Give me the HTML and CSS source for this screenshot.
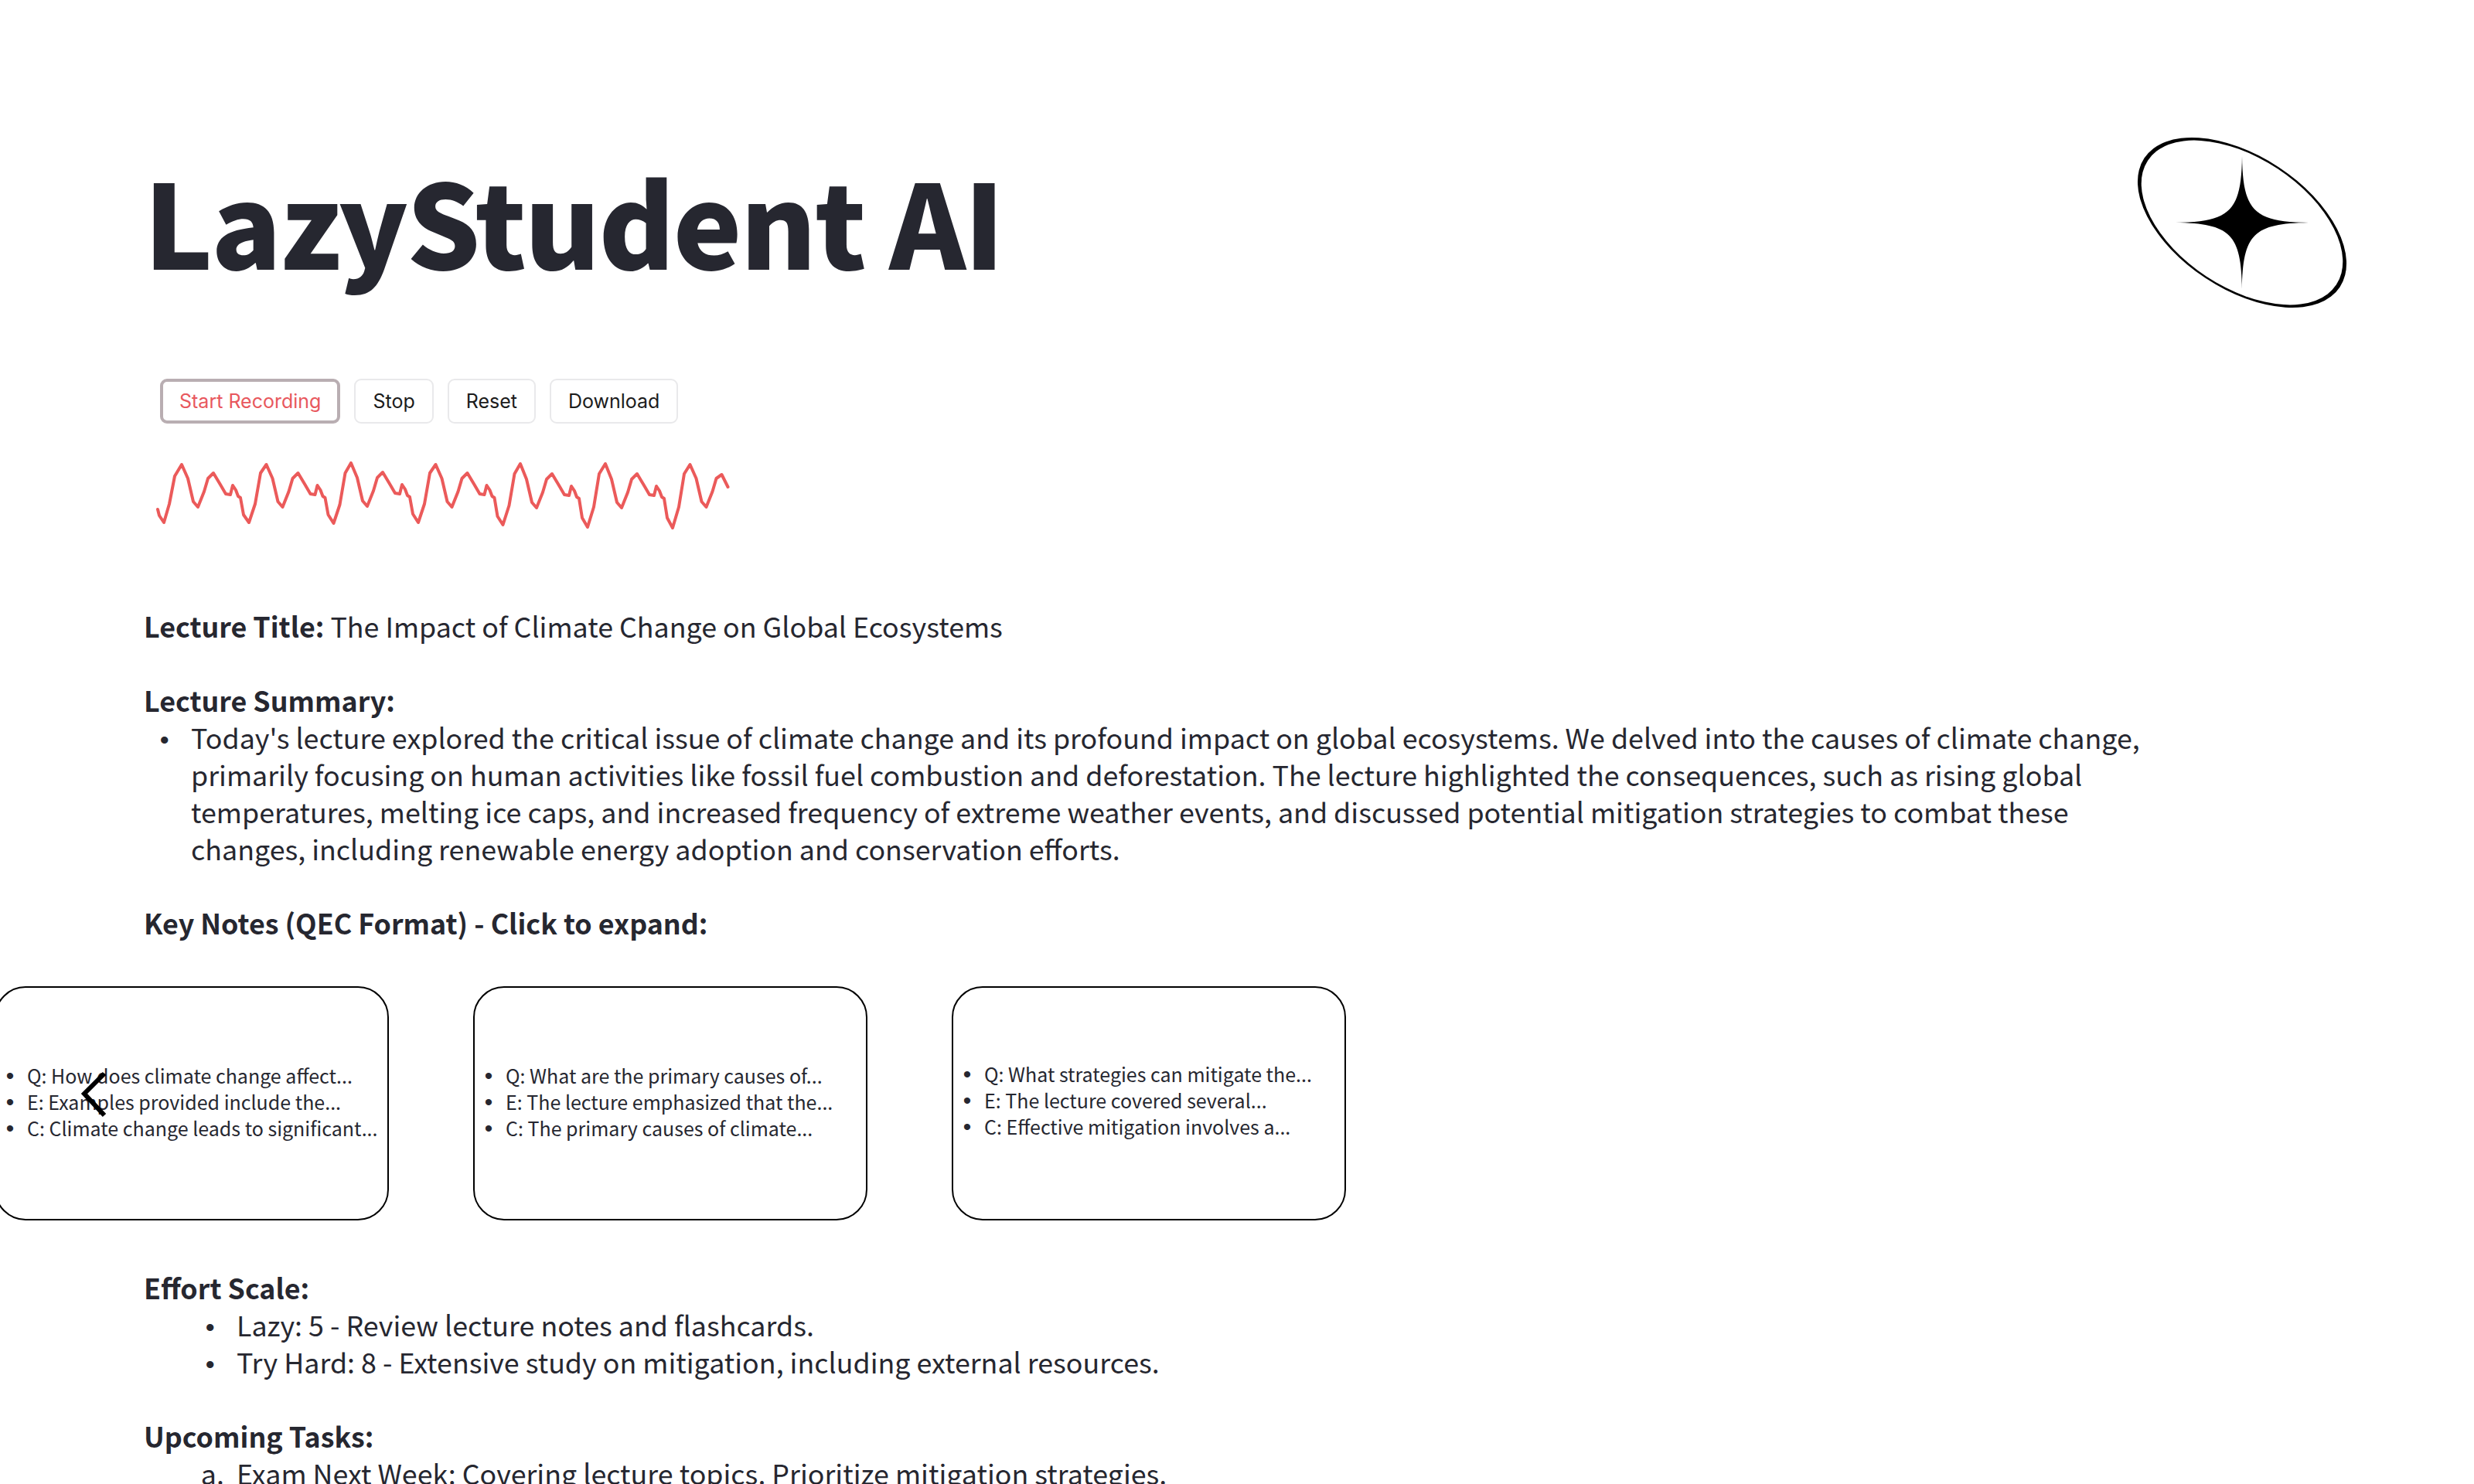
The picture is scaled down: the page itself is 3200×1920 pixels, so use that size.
FILE: index.html
```html
<!DOCTYPE html>
<html>
<head>
    <meta charset="utf-8">
    <title>LazyStudent AI</title>
    <link rel="stylesheet" href="styles.css">
</head>
<body>
    <div class="page">
        <div class="header">
            <h1 class="title">LazyStudent AI</h1>
            <svg class="logo" width="280" height="230" viewBox="0 0 280 230">
                <g transform="translate(140 115) rotate(33.4)">
                    <ellipse rx="151.5" ry="86" fill="#000"/>
                    <ellipse cx="0" cy="0" rx="146" ry="83.5" fill="#fff"/>
                </g>
                <path d="M140 29 C141 100 155 114 226 115 C155 116 141 130 140 201 C139 130 125 116 54 115 C125 114 139 100 140 29 Z" fill="#000"/>
            </svg>
        </div>

        <div class="toolbar">
            <button class="btn btn-active">Start Recording</button>
            <button class="btn">Stop</button>
            <button class="btn">Reset</button>
            <button class="btn">Download</button>
        </div>

        <svg class="wave" width="750" height="100" viewBox="0 0 750 100">
            <path fill="none" stroke="#eb5a5a" stroke-width="4" stroke-linejoin="round" stroke-linecap="round" d="M4 70 l2 8 l6 9 l7 -24 l7 -36 l9 -15
                l8 18 l7 30 l6 7 l8 -20 l5 -17 l7 -7 l9 15 l7 12 l6 1 l3 -12 l4 6 l3 8 l3 2 l4 22 l7 10 l8 -24 l7 -40 l7.5 -11
                l8 18 l7 30 l6 7 l8 -20 l5 -17 l7 -7 l9 15 l7 12 l6 1 l3 -12 l4 6 l3 8 l3 2 l4 22 l7 11 l8 -24 l7 -41 l7.5 -13
                l8 19 l7 30 l6 7 l8 -20 l5 -17 l7 -7 l9 15 l7 12 l6 1 l3 -12 l4 6 l3 8 l3 2 l4 22 l7 11 l8 -24 l7 -40 l7.5 -11
                l8 18 l7 30 l6 7 l8 -20 l5 -17 l7 -7 l9 15 l7 12 l6 1 l3 -12 l4 6 l3 8 l3 2 l4 24 l7 11 l8 -25 l7 -41 l7.5 -13
                l8 20 l7 30 l6 7 l8 -20 l5 -17 l7 -7 l9 15 l7 12 l6 1 l3 -12 l4 6 l3 8 l3 2 l4 25 l7 12 l8 -26 l7 -43 l8 -13
                l8 20 l7 30 l6 7 l8 -20 l5 -17 l7 -7 l9 15 l7 12 l6 1 l3 -12 l4 6 l3 8 l3 2 l4 25 l7 13 l8 -27 l7 -43 l7.5 -12
                l8 18 l7 30 l6 7 l8 -20 l5 -17 l7 -5 l8 16"/>
        </svg>

        <div class="content">
            <p class="line"><b>Lecture Title:</b> The Impact of Climate Change on Global Ecosystems</p>

            <p class="line section"><b>Lecture Summary:</b></p>
            <ul class="list list-summary">
                <li>Today's lecture explored the critical issue of climate change and its profound impact on global ecosystems. We delved into the causes of climate change, primarily focusing on human activities like fossil fuel combustion and deforestation. The lecture highlighted the consequences, such as rising global temperatures, melting ice caps, and increased frequency of extreme weather events, and discussed potential mitigation strategies to combat these changes, including renewable energy adoption and conservation efforts.</li>
            </ul>

            <p class="line section"><b>Key Notes (QEC Format) - Click to expand:</b></p>
        </div>

        <div class="carousel">
            <svg class="chevron" width="40" height="66" viewBox="0 0 40 66">
                <path d="M33 6 L7 32 L33 60" fill="none" stroke="#000" stroke-width="6"/>
            </svg>
            <div class="card">
                <ul>
                    <li>Q: How does climate change affect...</li>
                    <li>E: Examples provided include the...</li>
                    <li>C: Climate change leads to significant...</li>
                </ul>
            </div>
            <div class="card">
                <ul>
                    <li>Q: What are the primary causes of...</li>
                    <li>E: The lecture emphasized that the...</li>
                    <li>C: The primary causes of climate...</li>
                </ul>
            </div>
            <div class="card card-last">
                <ul>
                    <li>Q: What strategies can mitigate the...</li>
                    <li>E: The lecture covered several...</li>
                    <li>C: Effective mitigation involves a...</li>
                </ul>
            </div>
        </div>

        <div class="content">
            <p class="line"><b>Effort Scale:</b></p>
            <ul class="list">
                <li>Lazy: 5 - Review lecture notes and flashcards.</li>
                <li>Try Hard: 8 - Extensive study on mitigation, including external resources.</li>
            </ul>

            <p class="line section"><b>Upcoming Tasks:</b></p>
            <ol class="list list-tasks">
                <li>Exam Next Week: Covering lecture topics. Prioritize mitigation strategies.</li>
            </ol>
        </div>
    </div>
</body>
</html>
```

FILE: styles.css
```css
html, body {
    margin: 0;
    height: 1920px;
    overflow: hidden;
    background-color: white;
}
body {
    color: #262730;
    font-family: "Noto Sans CJK JP", "Open Sans", sans-serif;
}
.page {
    padding: 178px 400px 0 186px;
}
.header {
    display: flex;
    align-items: center;
    justify-content: space-between;
    height: 220px;
    margin-right: -240px;
}
.title {
    margin: 0;
    padding-bottom: 8px;
    font-size: 150px;
    line-height: 212px;
    font-weight: 900;
    letter-spacing: -2.4px;
}
.toolbar {
    display: flex;
    gap: 18px;
    margin-top: 92px;
    margin-left: 21px;
}
.btn {
    height: 58px;
    padding: 0 22px;
    border: 2px solid #e9e9eb;
    border-radius: 9px;
    background-color: white;
    color: #1c1c1c;
    font-family: Inter, sans-serif;
    font-size: 25px;
}
.btn-active {
    padding: 0 21px;
    border: 4px solid #b9aeb2;
    color: #e8585e;
}
.wave {
    display: block;
    margin-top: 41px;
    margin-left: 14px;
    filter: blur(0.6px);
}
.content {
    font-size: 35.8px;
    line-height: 48px;
}
.wave + .content {
    margin-top: 96px;
}
.line {
    margin: 0;
}
.section {
    margin-top: 48px;
}
.list {
    margin: 0;
    padding-left: 120px;
}
.list li::marker {
    content: "\2022\00a0\00a0\00a0";
    font-family: "Liberation Sans", sans-serif;
    font-size: 34px;
}
.list-summary {
    padding-left: 61px;
}
.list-tasks li::marker {
    content: counter(list-item, lower-alpha) ".\00a0\00a0";
    font-family: "Noto Sans CJK JP", sans-serif;
    font-size: 35.8px;
}
.carousel {
    position: relative;
    display: flex;
    gap: 109px;
    margin: 59px 0 62px -193px;
}
.chevron {
    position: absolute;
    left: 109px;
    top: 107px;
}
.card {
    display: flex;
    flex: 0 0 auto;
    align-items: center;
    box-sizing: border-box;
    width: 510px;
    height: 303px;
    border: 2px solid black;
    border-radius: 40px;
    font-size: 25px;
    line-height: 34px;
}
.card ul {
    margin: 0 0 6px;
    padding-left: 40px;
}
.card li::marker {
    content: "\2022\00a0\00a0";
    font-family: "Liberation Sans", sans-serif;
    font-size: 30px;
}
.card-last ul {
    margin-bottom: 9px;
}
```
